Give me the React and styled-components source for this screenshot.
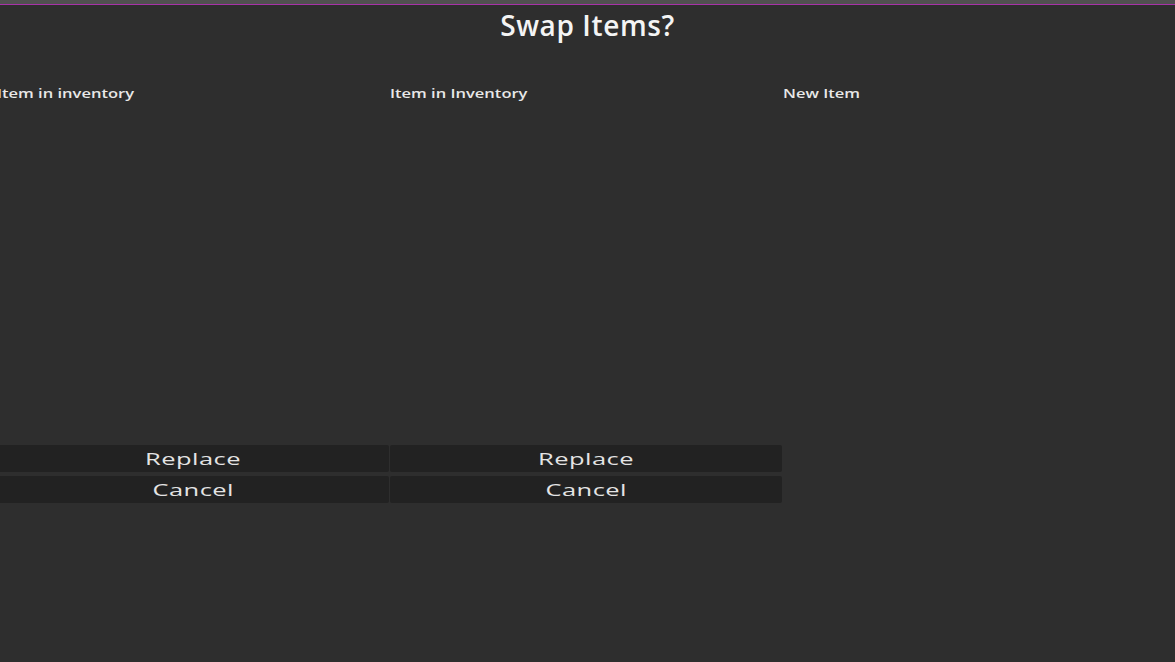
import React from "react";
import styled, { createGlobalStyle } from "styled-components";

const GlobalStyle = createGlobalStyle`
  html, body {
    margin: 0;
    padding: 0;
    background: #2e2e2e;
    overflow: hidden;
  }
  body {
    font-family: "Open Sans", "Noto Sans", sans-serif;
  }
`;

const columns = [
  { label: "Item in inventory", actions: true },
  { label: "Item in Inventory", actions: true },
  { label: "New Item", actions: false },
];

export default function App() {
  return (
    <>
      <GlobalStyle />
      <Screen>
        <TopBar />
        <Title>Swap Items?</Title>
        <Columns>
          {columns.map((col) => (
            <Column key={col.label}>
              <Label>
                <Wide>{col.label}</Wide>
              </Label>
              <Slot />
              {col.actions && (
                <Actions>
                  <Button>
                    <ButtonText>Replace</ButtonText>
                  </Button>
                  <Button>
                    <ButtonText>Cancel</ButtonText>
                  </Button>
                </Actions>
              )}
            </Column>
          ))}
        </Columns>
      </Screen>
    </>
  );
}

const Screen = styled.div`
  width: 1175px;
  height: 662px;
  background: #2e2e2e;
  display: flex;
  flex-direction: column;
  overflow: hidden;
`;

const TopBar = styled.div`
  height: 4px;
  background: #505050;
  border-bottom: 1.5px solid #a832a8;
  flex-shrink: 0;
`;

const Title = styled.h1`
  margin: 0;
  padding-top: 1px;
  height: 43px;
  text-align: center;
  font-size: 28px;
  font-weight: 600;
  line-height: 38px;
  letter-spacing: 0.6px;
  color: #f4f4f4;
`;

const Columns = styled.div`
  display: grid;
  grid-template-columns: repeat(3, 393px);
  margin-left: -3px;
  padding-top: 34px;
`;

const Column = styled.div`
  display: flex;
  flex-direction: column;
`;

const Label = styled.div`
  height: 20px;
  font-size: 13px;
  font-weight: 600;
  line-height: 20px;
  color: #e8e8e8;
  white-space: nowrap;
`;

const Wide = styled.span`
  display: inline-block;
  transform: scaleX(1.27);
  transform-origin: left center;
`;

const Slot = styled.div`
  height: 342px;
`;

const Actions = styled.div`
  display: flex;
  flex-direction: column;
  gap: 4px;
  padding-right: 1px;
`;

const Button = styled.button`
  height: 27px;
  border: none;
  border-radius: 2px;
  background: #222222;
  color: #e4e4e4;
  font-family: "Open Sans", "Noto Sans", sans-serif;
  font-size: 17px;
  font-weight: 500;
  line-height: 27px;
  padding: 0;
`;

const ButtonText = styled.span`
  display: inline-block;
  transform: scaleX(1.5);
  letter-spacing: 0.3px;
`;
